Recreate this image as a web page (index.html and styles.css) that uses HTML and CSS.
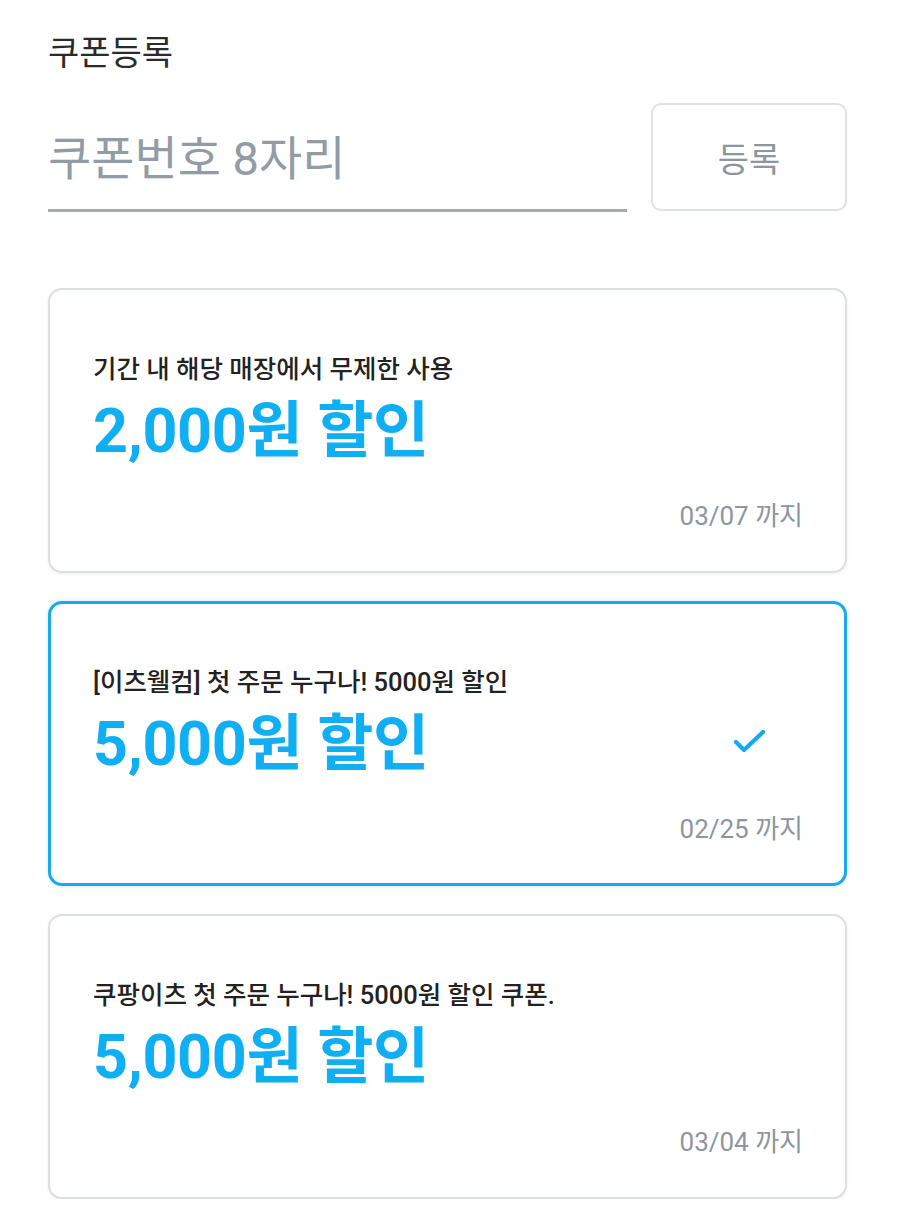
FILE: index.html
```html
<!DOCTYPE html>
<html lang="ko">
<head>
<meta charset="utf-8">
<title>쿠폰등록</title>
<link rel="stylesheet" href="styles.css">
</head>
<body>
<main class="page">
  <h1 class="title">쿠폰등록</h1>
  <div class="register">
    <input class="code-input" type="text" placeholder="쿠폰번호 8자리">
    <button class="register-btn" type="button">등록</button>
  </div>
  <ul class="coupons">
    <li class="coupon">
      <p class="desc">기간 내 해당 매장에서 무제한 사용</p>
      <div class="amount-row"><span class="amount">2,000원 할인</span></div>
      <p class="expire">03/07 까지</p>
    </li>
    <li class="coupon selected">
      <p class="desc">[이츠웰컴] 첫 주문 누구나! 5000원 할인</p>
      <div class="amount-row">
        <span class="amount">5,000원 할인</span>
        <svg class="check" width="34" height="26" viewBox="0 0 34 26"><path d="M3 13 L11 21 L30 3" fill="none" stroke="#17a9ee" stroke-width="4.2" stroke-linecap="round" stroke-linejoin="round"/></svg>
      </div>
      <p class="expire">02/25 까지</p>
    </li>
    <li class="coupon">
      <p class="desc">쿠팡이츠 첫 주문 누구나! 5000원 할인 쿠폰.</p>
      <div class="amount-row"><span class="amount">5,000원 할인</span></div>
      <p class="expire">03/04 까지</p>
    </li>
  </ul>
</main>
</body>
</html>
```
FILE: styles.css
```css
* { box-sizing: border-box; }
html, body { margin: 0; padding: 0; background: #ffffff; }
body {
  font-family: Roboto, "Noto Sans CJK KR", sans-serif;
  color: #222;
}
.page {
  padding: 33px 53px 0 48px;
}
.title {
  margin: 0;
  font-size: 34px;
  line-height: 40px;
  font-weight: 400;
  color: #2b2b2b;
}
.register {
  margin-top: 30px;
  display: flex;
  align-items: stretch;
  gap: 24px;
  height: 108px;
}
.code-input {
  flex: 1;
  min-width: 0;
  border: none;
  border-bottom: 3px solid #a3abb2;
  outline: none;
  background: transparent;
  font-family: Roboto, "Noto Sans CJK KR", sans-serif;
  font-size: 47px;
  color: #333;
  padding: 4px 0 0 0;
  margin-bottom: -1px;
}
.code-input::placeholder { color: #929ca5; }
.register-btn {
  width: 196px;
  border: 2px solid #dfe2e5;
  border-radius: 10px;
  background: #fff;
  font-family: Roboto, "Noto Sans CJK KR", sans-serif;
  font-size: 34px;
  color: #8d959d;
  padding: 0;
}
.coupons {
  list-style: none;
  margin: 77px 0 0 0;
  padding: 0;
  display: flex;
  flex-direction: column;
  gap: 28px;
}
.coupon {
  height: 285px;
  border: 2px solid #dcdfe2;
  border-radius: 14px;
  box-shadow: 0 1px 3px rgba(0,0,0,0.07);
  padding: 63px 42px 0 43px;
}
.coupon.selected {
  border: 3px solid #1aa8ee;
  padding: 62px 41px 0 42px;
  box-shadow: 0 0 4px rgba(26,168,238,0.25);
}
.desc {
  margin: 0;
  font-size: 25.5px;
  line-height: 32px;
  font-weight: 500;
  color: #222;
}
.amount-row {
  margin-top: 14px;
  height: 64px;
  display: flex;
  align-items: center;
  justify-content: space-between;
}
.amount {
  font-size: 61px;
  line-height: 64px;
  font-weight: 700;
  color: #10aef2;
  letter-spacing: -0.3px;
}
.check {
  margin-right: 36px;
  margin-top: -4px;
}
.expire {
  margin: 37px 0 0 0;
  text-align: right;
  font-size: 26px;
  line-height: 32px;
  color: #8e969d;
}
```
